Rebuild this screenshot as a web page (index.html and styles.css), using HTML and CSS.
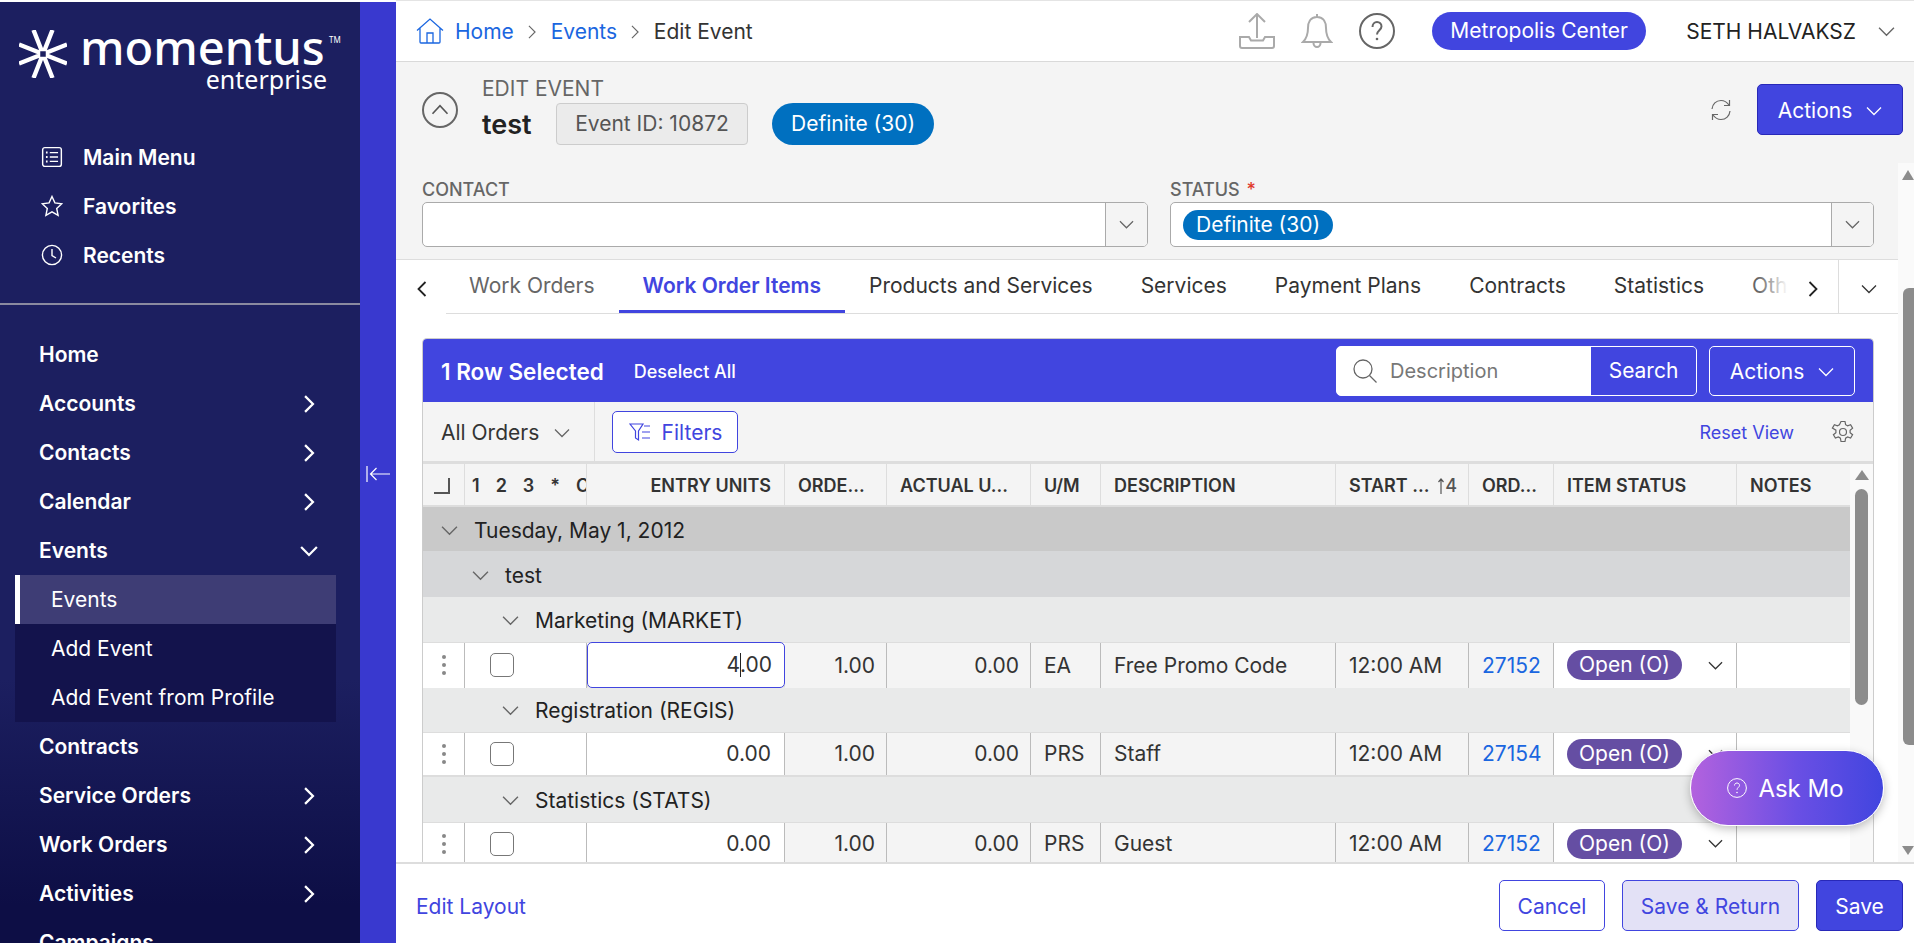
FILE: index.html
```html
<!DOCTYPE html>
<html>
	<head>
		<meta charset="utf-8">
		<title>Edit Event</title>
		<link rel="stylesheet" href="styles.css">
	</head>
	<body>
		<svg class="defs" width="0" height="0">
			<symbol id="chev-down" viewBox="0 0 16 16"><path d="M1 4.5 8 11.5 15 4.5" fill="none" stroke="currentColor"/></symbol>
			<symbol id="chev-right" viewBox="0 0 16 16"><path d="M4.5 1 11.5 8 4.5 15" fill="none" stroke="currentColor"/></symbol>
			<symbol id="chev-left" viewBox="0 0 16 16"><path d="M11.5 1 4.5 8 11.5 15" fill="none" stroke="currentColor"/></symbol>
		</svg>
		<div class="page">
			<div class="sidebar">
				<div class="logo">
					<svg class="logo-star" viewBox="0 0 48 48">
						<g stroke="#fff" stroke-width="4.4">
							<path d="M24 24 14.5 0M24 24 33.500 0M24 24 14.500 48M24 24 33.500 48M24 24 0 14.500M24 24 0 33.500M24 24 48 14.500M24 24 48 33.500"/>
						</g>
						<rect x="20.500" y="20.500" width="7" height="7" fill="#1c1f60" stroke="#fff" stroke-width="1.500"/>
					</svg>
					<div class="logo-text">
						<div class="logo-name">momentus<span class="logo-tm">TM</span></div>
						<div class="logo-sub">enterprise</div>
					</div>
				</div>
				<ul class="quick">
					<li>
						<svg viewBox="0 0 20 20" fill="none" stroke="#fff" stroke-width="1.300"><rect x="1.500" y="1.500" width="17" height="17" rx="2"/><path d="M8 6h7.500M8 10h7.500M8 14h7.500"/><path d="M4.500 6h1.500M4.500 10h1.500M4.500 14h1.500" stroke-width="1.800"/></svg>
						<span>Main Menu</span>
					</li>
					<li>
						<svg viewBox="0 0 22 22" fill="none" stroke="#fff" stroke-width="1.400"><path d="M11 1.500 13.900 7.900 20.800 8.700 15.700 13.400 17.100 20.300 11 16.800 4.900 20.300 6.300 13.400 1.200 8.700 8.100 7.900Z"/></svg>
						<span>Favorites</span>
					</li>
					<li>
						<svg viewBox="0 0 22 22" fill="none" stroke="#fff" stroke-width="1.400"><circle cx="11" cy="11" r="9.600"/><path d="M11 5v6.500l4 2.500"/></svg>
						<span>Recents</span>
					</li>
				</ul>
				<ul class="nav">
					<li class="nav-item">Home</li>
					<li class="nav-item">Accounts<svg class="nav-arrow"><use href="#chev-right"/></svg></li>
					<li class="nav-item">Contacts<svg class="nav-arrow"><use href="#chev-right"/></svg></li>
					<li class="nav-item">Calendar<svg class="nav-arrow"><use href="#chev-right"/></svg></li>
					<li class="nav-item">Events<svg class="nav-arrow"><use href="#chev-down"/></svg></li>
					<li class="subnav">
						<div class="subnav-item subnav-active">Events</div>
						<div class="subnav-item">Add Event</div>
						<div class="subnav-item">Add Event from Profile</div>
					</li>
					<li class="nav-item">Contracts</li>
					<li class="nav-item">Service Orders<svg class="nav-arrow"><use href="#chev-right"/></svg></li>
					<li class="nav-item">Work Orders<svg class="nav-arrow"><use href="#chev-right"/></svg></li>
					<li class="nav-item">Activities<svg class="nav-arrow"><use href="#chev-right"/></svg></li>
					<li class="nav-item">Campaigns</li>
				</ul>
			</div>
			<div class="strip">
				<svg viewBox="0 0 24 16" fill="none" stroke="#fff" stroke-width="1.200"><path d="M1 0v16M24 8H5M10.500 2 4.500 8l6 6"/></svg>
			</div>
			<div class="main">
				<div class="topbar">
					<div class="crumbs">
						<svg class="home-icon" viewBox="0 0 28 26" fill="none" stroke="#1a66e0" stroke-width="1.300"><path d="M1 12.500 14 1l13 11.500M4 10v14a1 1 0 0 0 1 1h18a1 1 0 0 0 1-1V10"/><path d="M11 25V15h6v10"/></svg>
						<a class="crumb-link" href="#">Home</a>
						<svg class="crumb-sep"><use href="#chev-right"/></svg>
						<a class="crumb-link" href="#">Events</a>
						<svg class="crumb-sep"><use href="#chev-right"/></svg>
						<span>Edit Event</span>
					</div>
					<div class="top-right">
						<svg class="top-icon icon-upload" viewBox="0 0 36 36" fill="none" stroke="#aaa" stroke-width="2"><path d="M18 25V1M10 9l8-8 8 8M1 24h9l2 3.500h12l2-3.500h9v9a2 2 0 0 1-2 2H3a2 2 0 0 1-2-2Z"/></svg>
						<svg class="top-icon icon-bell" viewBox="0 0 32 36" fill="none" stroke="#aaa" stroke-width="2"><path d="M16 4C9 4 7 10 7 15c0 8-2 11-5 14h28c-3-3-5-6-5-14 0-5-2-11-9-11ZM16 1v3M12.500 30a3.500 4 0 0 0 7 0"/></svg>
						<svg class="top-icon icon-help" viewBox="0 0 36 36" fill="none" stroke="#666" stroke-width="2"><circle cx="18" cy="18" r="17"/><path d="M13.500 14c0-3 2-5 4.500-5s4.500 2 4.500 4.500c0 3.500-4.500 4-4.500 8"/><circle cx="18" cy="26" r="1.300" fill="#666" stroke="none"/></svg>
						<div class="venue">Metropolis Center</div>
						<div class="user">SETH HALVAKSZ</div>
						<svg class="user-arrow"><use href="#chev-down"/></svg>
					</div>
				</div>
				<div class="title-bar">
					<div class="collapse">
						<svg viewBox="0 0 16 16"><path d="M2 11 8 4.500 14 11" fill="none" stroke="#555" stroke-width="1.300"/></svg>
					</div>
					<div class="title-text">
						<div class="eyebrow">EDIT EVENT</div>
						<div class="title-row">
							<span class="event-name">test</span>
							<span class="event-id">Event ID: 10872</span>
							<span class="status-pill">Definite (30)</span>
						</div>
					</div>
					<svg class="refresh" viewBox="0 0 22 22" fill="none" stroke="#666" stroke-width="1.200"><path d="M2 10C2.500 5 6 1.500 11 1.500c3.500 0 6 1.700 8 4.500M19.500 1v5.500H14M20 12c-.5 5-4 8.500-9 8.500-3.500 0-6-1.700-8-4.500M2.500 21v-5.500H8"/></svg>
					<button class="btn btn-primary btn-actions">Actions<svg><use href="#chev-down"/></svg></button>
				</div>
				<div class="scroller">
					<div class="content">
						<div class="fields">
							<div class="field field-contact">
								<label>CONTACT</label>
								<div class="select">
									<div class="select-value"></div>
									<div class="select-arrow"><svg><use href="#chev-down"/></svg></div>
								</div>
							</div>
							<div class="field field-status">
								<label>STATUS <span class="req">*</span></label>
								<div class="select">
									<div class="select-value"><span class="status-pill small">Definite (30)</span></div>
									<div class="select-arrow"><svg><use href="#chev-down"/></svg></div>
								</div>
							</div>
						</div>
						<div class="tabs">
							<div class="tab-prev"><svg><use href="#chev-left"/></svg></div>
							<div class="tab-list">
								<a class="tab tab-muted">Work Orders</a>
								<a class="tab tab-active">Work Order Items</a>
								<a class="tab">Products and Services</a>
								<a class="tab">Services</a>
								<a class="tab">Payment Plans</a>
								<a class="tab">Contracts</a>
								<a class="tab">Statistics</a>
								<a class="tab tab-muted">Other</a>
							</div>
							<div class="tab-next"><svg><use href="#chev-right"/></svg></div>
							<div class="tab-more"><svg><use href="#chev-down"/></svg></div>
						</div>
						<div class="card">
							<div class="card-head">
								<span class="selected">1 Row Selected</span>
								<a class="deselect">Deselect All</a>
								<div class="search">
									<svg viewBox="0 0 24 24" fill="none" stroke="#666" stroke-width="1.300"><circle cx="10" cy="10" r="9"/><path d="M16.500 16.500 23.500 23.500"/></svg>
									<span class="search-input">Description</span>
									<span class="search-btn">Search</span>
								</div>
								<button class="btn btn-outline-white">Actions<svg><use href="#chev-down"/></svg></button>
							</div>
							<div class="toolbar">
								<div class="orders">All Orders<svg><use href="#chev-down"/></svg></div>
								<button class="filters">
									<svg viewBox="0 0 22 22" fill="none" stroke="#4145df" stroke-width="1.200"><path d="M1 3h13L9.500 10v9l-3-2v-7ZM15 5h6M13 11h8M13 17h8"/></svg>
									Filters
								</button>
								<a class="reset">Reset View</a>
								<svg class="gear" viewBox="0 0 24 24" fill="none" stroke="#666" stroke-width="1.200"><circle cx="12" cy="12" r="3.500"/><path d="M10 1.500h4l.6 3.200 2 1.100 3-1.100 2 3.400-2.500 2.100v2.400l2.500 2.100-2 3.400-3-1.100-2 1.100-.6 3.400h-4l-.6-3.400-2-1.100-3 1.100-2-3.400 2.500-2.100v-2.400L1.400 8.100l2-3.400 3 1.100 2-1.100Z"/></svg>
							</div>
							<div class="grid-wrap">
								<div class="grid">
									<div class="row row-head">
										<div class="cell cell-corner"><span class="corner"></span></div>
										<div class="cell cell-flags"><span>1</span><span>2</span><span>3</span><span>*</span><span>C</span></div>
										<div class="cell num">ENTRY UNITS</div>
										<div class="cell">ORDE...</div>
										<div class="cell">ACTUAL U...</div>
										<div class="cell">U/M</div>
										<div class="cell">DESCRIPTION</div>
										<div class="cell cell-sort">START ...<span class="sort"><svg viewBox="0 0 6 16" fill="none" stroke="#555" stroke-width="1.200"><path d="M3 16V1M.5 4 3 1l2.500 3"/></svg>4</span></div>
										<div class="cell">ORD...</div>
										<div class="cell">ITEM STATUS</div>
										<div class="cell">NOTES</div>
									</div>
									<div class="group group-1"><svg><use href="#chev-down"/></svg>Tuesday, May 1, 2012</div>
									<div class="group group-2"><svg><use href="#chev-down"/></svg>test</div>
									<div class="group group-3"><svg><use href="#chev-down"/></svg>Marketing (MARKET)</div>
									<div class="row">
										<div class="cell cell-drag"><span class="dots"></span></div>
										<div class="cell cell-check"><span class="check"></span></div>
										<div class="cell num cell-focus"><span>4<i class="caret"></i>.00</span></div>
										<div class="cell num shade">1.00</div>
										<div class="cell num shade">0.00</div>
										<div class="cell shade">EA</div>
										<div class="cell shade">Free Promo Code</div>
										<div class="cell shade">12:00 AM</div>
										<div class="cell shade"><a class="order-link">27152</a></div>
										<div class="cell cell-status"><span class="open-pill">Open (O)</span><svg><use href="#chev-down"/></svg></div>
										<div class="cell"></div>
									</div>
									<div class="group group-3"><svg><use href="#chev-down"/></svg>Registration (REGIS)</div>
									<div class="row">
										<div class="cell cell-drag"><span class="dots"></span></div>
										<div class="cell cell-check"><span class="check"></span></div>
										<div class="cell num">0.00</div>
										<div class="cell num shade">1.00</div>
										<div class="cell num shade">0.00</div>
										<div class="cell shade">PRS</div>
										<div class="cell shade">Staff</div>
										<div class="cell shade">12:00 AM</div>
										<div class="cell shade"><a class="order-link">27154</a></div>
										<div class="cell cell-status"><span class="open-pill">Open (O)</span><svg><use href="#chev-down"/></svg></div>
										<div class="cell"></div>
									</div>
									<div class="group group-3"><svg><use href="#chev-down"/></svg>Statistics (STATS)</div>
									<div class="row">
										<div class="cell cell-drag"><span class="dots"></span></div>
										<div class="cell cell-check"><span class="check"></span></div>
										<div class="cell num">0.00</div>
										<div class="cell num shade">1.00</div>
										<div class="cell num shade">0.00</div>
										<div class="cell shade">PRS</div>
										<div class="cell shade">Guest</div>
										<div class="cell shade">12:00 AM</div>
										<div class="cell shade"><a class="order-link">27152</a></div>
										<div class="cell cell-status"><span class="open-pill">Open (O)</span><svg><use href="#chev-down"/></svg></div>
										<div class="cell"></div>
									</div>
								</div>
								<div class="inner-bar">
									<span class="arrow-up"></span>
									<span class="inner-thumb"></span>
								</div>
							</div>
						</div>
					</div>
					<div class="outer-bar">
						<span class="arrow-up"></span>
						<span class="outer-thumb"></span>
						<span class="arrow-down"></span>
					</div>
				</div>
				<div class="footer">
					<a class="edit-layout">Edit Layout</a>
					<button class="btn btn-outline">Cancel</button>
					<button class="btn btn-soft">Save &amp; Return</button>
					<button class="btn btn-primary">Save</button>
				</div>
				<div class="ask-mo">
					<svg viewBox="0 0 20 20" fill="none" stroke="#fff" stroke-width="1"><circle cx="10" cy="10" r="9.400"/><path d="M7.500 7.500C7.500 6 8.600 5 10 5s2.500 1 2.500 2.300c0 2-2.500 2.200-2.500 4.500"/><circle cx="10" cy="14.500" r=".8" fill="#fff" stroke="none"/></svg>
					Ask Mo
				</div>
			</div>
		</div>
	</body>
</html>
```
FILE: styles.css
```css
*{
	margin: 0;
	padding: 0;
	box-sizing: border-box;
}
ul{
	list-style: none;
}
a{
	text-decoration: none;
}
body{
	width: 1914px;
	height: 943px;
	overflow: hidden;
	background-color: #fff;
	font-family: Inter, "Liberation Sans", sans-serif;
	font-size: 21px;
	color: #333;
}
button{
	font-family: inherit;
}
use{
	stroke-width: 1.300;
}
.defs{
	display: block;
	height: 0;
}
.page{
	display: flex;
	height: 943px;
	padding-top: 2px;
}

/* left menu */
.sidebar{
	width: 360px;
	height: 941px;
	flex-shrink: 0;
	overflow: hidden;
	color: #fff;
	background: linear-gradient(#1c1f60 0, #1c1f60 72%, #0d0e45 96%);
}
.logo{
	display: flex;
	height: 130px;
	padding: 28px 0 0 19px;
}
.logo-star{
	width: 48px;
	height: 48px;
}
.logo-text{
	margin-left: 13px;
	width: 260px;
}
.logo-name{
	position: relative;
	font-family: "Noto Sans", sans-serif;
	font-size: 47px;
	font-weight: 500;
	line-height: 40px;
	margin-top: -3px;
}
.logo-tm{
	position: absolute;
	top: 8px;
	left: 249px;
	font-size: 8px;
	line-height: 10px;
	font-weight: 400;
}
.logo-sub{
	font-family: "Noto Sans", sans-serif;
	font-size: 25px;
	line-height: 24px;
	text-align: right;
	padding-right: 13px;
}
.quick{
	height: 173px;
	border-bottom: 2px solid #8a8aa0;
}
.quick li{
	display: flex;
	align-items: center;
	height: 49px;
	padding-left: 41px;
	font-weight: 600;
}
.quick span{
	padding-top: 1px;
}
.quick svg{
	width: 22px;
	height: 22px;
	margin-right: 20px;
}
.nav{
	margin-top: 25px;
}
.nav-item{
	display: flex;
	align-items: center;
	justify-content: space-between;
	height: 49px;
	padding: 0 42px 0 39px;
	font-weight: 600;
}
.nav-arrow{
	width: 18px;
	height: 18px;
}
.nav-arrow use{
	stroke-width: 2;
}
.subnav{
	width: 321px;
	margin-left: 15px;
	background-color: #13134c;
}
.subnav-item{
	display: flex;
	align-items: center;
	height: 49px;
	padding-left: 36px;
}
.subnav-active{
	padding-left: 31px;
	border-left: 5px solid #fff;
	background-color: #3e3d75;
}
.strip{
	width: 36px;
	flex-shrink: 0;
	padding: 464px 6px 0;
	background-color: #3939cf;
}
.strip svg{
	display: block;
	width: 24px;
	height: 16px;
}

/* main column */
.main{
	position: relative;
	flex: 1;
	min-width: 0;
	display: flex;
	flex-direction: column;
}
.topbar{
	display: flex;
	align-items: center;
	justify-content: space-between;
	flex-shrink: 0;
	padding: 0 19px 0 20px;
	border-top: 1px solid #e4e4e4;
	border-bottom: 1px solid #d9d9d9;
	margin-top: -2px;
	height: 62px;
}
.crumbs{
	display: flex;
	align-items: center;
}
.home-icon{
	width: 28px;
	height: 26px;
	margin-right: 11px;
}
.crumb-link{
	color: #1a66e0;
}
.crumb-sep{
	width: 14px;
	height: 14px;
	margin: 2px 11.400px 0;
	color: #666;
}
.top-right{
	display: flex;
	align-items: center;
}
.top-icon{
	height: 36px;
}
.icon-upload{
	width: 36px;
}
.icon-bell{
	width: 32px;
	margin-left: 26px;
}
.icon-help{
	width: 36px;
	margin-left: 26px;
}
.venue{
	width: 214px;
	height: 38px;
	margin-left: 37px;
	line-height: 38px;
	text-align: center;
	color: #fff;
	background-color: #4145df;
	border-radius: 19px;
}
.user{
	margin-left: 40px;
	color: #222;
}
.user-arrow{
	width: 17px;
	height: 17px;
	margin-left: 22px;
	color: #666;
}
.title-bar{
	display: flex;
	height: 101px;
	flex-shrink: 0;
	padding: 0 11px 0 26px;
	background-color: #f4f4f4;
}
.collapse{
	display: flex;
	align-items: center;
	justify-content: center;
	width: 36px;
	height: 36px;
	margin-top: 30px;
	border: 2px solid #666;
	border-radius: 50%;
}
.collapse svg{
	width: 20px;
	height: 20px;
}
.title-text{
	margin-left: 24px;
	flex: 1;
}
.eyebrow{
	margin-top: 16px;
	height: 22px;
	line-height: 22px;
	font-size: 21px;
	color: #666;
}
.title-row{
	display: flex;
	align-items: center;
	margin-top: 3px;
}
.event-name{
	width: 74px;
	font-size: 27px;
	font-weight: 600;
	color: #222;
}
.event-id{
	width: 192px;
	height: 42px;
	line-height: 40px;
	text-align: center;
	color: #555;
	background-color: #ebebeb;
	border: 1px solid #ccc;
	border-radius: 4px;
}
.status-pill{
	display: inline-block;
	height: 42px;
	margin-left: 24px;
	padding: 0 19px;
	line-height: 41px;
	color: #fff;
	background-color: #0070c0;
	border-radius: 21px;
}
.status-pill.small{
	height: 30px;
	margin-left: 0;
	padding: 0 13px;
	line-height: 30px;
	border-radius: 15px;
}
.refresh{
	width: 22px;
	height: 22px;
	margin: 37px 25px 0 0;
}
.btn{
	display: inline-flex;
	align-items: center;
	justify-content: center;
	height: 51px;
	padding-top: 2px;
	font-size: 21px;
	border-radius: 5px;
	border: 1px solid #4145df;
	background-color: #fff;
	color: #4145df;
}
.btn svg{
	width: 16px;
	height: 16px;
	margin-left: 14px;
}
.btn-primary{
	color: #fff;
	background-color: #4145df;
	border-color: #2828b8;
}
.btn-actions{
	width: 146px;
	margin-top: 22px;
}

/* scrolling part */
.scroller{
	flex: 1;
	min-height: 0;
	display: flex;
}
.content{
	flex: 1;
	min-width: 0;
	overflow: hidden;
}
.fields{
	display: flex;
	height: 97px;
	padding: 0 24px 0 26px;
	background-color: #f4f4f4;
	border-bottom: 1px solid #ddd;
}
.field label{
	display: block;
	height: 39px;
	padding-top: 17px;
	line-height: 20px;
	font-size: 18px;
	font-weight: 500;
	color: #666;
}
.field-contact{
	width: 726px;
}
.field-status{
	width: 704px;
	margin-left: 22px;
}
.req{
	color: #e0392b;
	margin-left: 2px;
}
.select{
	display: flex;
	height: 45px;
	background-color: #fff;
	border: 1px solid #aaa;
	border-radius: 5px;
	overflow: hidden;
}
.select-value{
	flex: 1;
	display: flex;
	align-items: center;
	padding-left: 12px;
}
.select-arrow{
	display: flex;
	align-items: center;
	justify-content: center;
	width: 42px;
	color: #666;
	background-color: #f4f4f4;
	border-left: 1px solid #aaa;
}
.select-arrow svg{
	width: 15px;
	height: 15px;
}
.tabs{
	display: flex;
	height: 54px;
}
.tab-prev{
	display: flex;
	align-items: center;
	justify-content: center;
	width: 50px;
	padding: 4px 0 0 2px;
	color: #222;
}
.tab-prev svg, .tab-next svg, .tab-more svg{
	width: 16px;
	height: 16px;
}
.tab-prev use, .tab-next use{
	stroke-width: 1.800;
}
.tab-list{
	position: relative;
	flex: 1;
	min-width: 0;
	display: flex;
	overflow: hidden;
	white-space: nowrap;
	border-bottom: 1px solid #ddd;
}
.tab-list::after{
	content: "";
	position: absolute;
	top: 0;
	right: 0;
	width: 40px;
	height: 52px;
	background: linear-gradient(to right, rgba(255,255,255,0), #fff 75%);
}
.tab{
	height: 54px;
	padding: 0 24px;
	line-height: 52px;
	color: #333;
	margin-left: -1px;
	margin-right: 1px;
}
.tab-muted{
	color: #666;
}
.tab-active{
	color: #4145df;
	font-weight: 600;
	border-bottom: 4px solid #4145df;
}
.tab-next{
	display: flex;
	align-items: center;
	justify-content: center;
	width: 40px;
	padding: 4px 10px 0 0;
	color: #222;
	border-bottom: 1px solid #ddd;
}
.tab-more{
	display: flex;
	align-items: center;
	justify-content: center;
	width: 60px;
	padding-top: 4px;
	color: #333;
	border-left: 1px solid #ddd;
	border-bottom: 1px solid #ddd;
}
.card{
	margin: 24px 24px 0 26px;
	height: 524px;
	overflow: hidden;
	border: 1px solid #ccc;
	border-bottom: 0;
	border-radius: 5px 5px 0 0;
}
.card-head{
	display: flex;
	align-items: center;
	height: 63px;
	padding: 0 18px;
	color: #fff;
	background-color: #4145df;
}
.selected{
	padding-top: 1px;
	font-size: 22.500px;
	font-weight: 600;
}
.deselect{
	margin-left: 30px;
	padding-top: 1px;
	flex: 1;
	font-size: 18px;
	font-weight: 500;
}
.search{
	display: flex;
	align-items: center;
	width: 361px;
	height: 50px;
	padding-left: 16px;
	background-color: #fff;
	border-radius: 5px;
	overflow: hidden;
	border: 1px solid #fff;
}
.search svg{
	width: 24px;
	height: 24px;
	flex-shrink: 0;
}
.search-input{
	flex: 1;
	margin-left: 13px;
	padding-top: 1px;
	font-size: 20px;
	color: #777;
}
.search-btn{
	width: 105px;
	height: 48px;
	line-height: 48px;
	text-align: center;
	color: #fff;
	background-color: #4145df;
}
.btn-outline-white{
	width: 146px;
	height: 50px;
	margin-left: 12px;
	color: #fff;
	background-color: transparent;
	border-color: #fff;
}
.toolbar{
	display: flex;
	align-items: center;
	height: 59px;
	padding-right: 18px;
	background-color: #f4f4f4;
}
.orders{
	display: flex;
	align-items: center;
	width: 172px;
	height: 59px;
	padding: 2px 0 0 18px;
	color: #333;
	border-right: 1px solid #ddd;
}
.orders svg{
	width: 16px;
	height: 16px;
	margin-left: 15px;
	color: #666;
}
.filters{
	display: flex;
	align-items: center;
	justify-content: center;
	width: 126px;
	height: 42px;
	margin-left: 17px;
	padding: 1px 0 0 1px;
	font-size: 21px;
	color: #4145df;
	background-color: #fff;
	border: 1px solid #4145df;
	border-radius: 5px;
}
.filters svg{
	width: 22px;
	height: 22px;
	margin-right: 11px;
}
.reset{
	margin-left: auto;
	padding-top: 2px;
	font-size: 18px;
	color: #4145df;
}
.gear{
	width: 24px;
	height: 24px;
	margin-left: 37px;
}
.grid-wrap{
	display: flex;
	border-top: 3px solid #ddd;
}
.grid{
	width: 1427px;
	flex-shrink: 0;
}
.row{
	display: grid;
	grid-template-columns: 42px 122px 198px 102px 144px 70px 235px 133px 85px 183px 113px;
	height: 44.500px;
	border-bottom: 2px solid #ddd;
}
.row-head{
	height: 43px;
	background-color: #f4f4f4;
	font-size: 18px;
	font-weight: 600;
}
.cell{
	display: flex;
	align-items: center;
	padding: 0 13px;
	overflow: hidden;
	white-space: nowrap;
	border-right: 1px solid #bbb;
	background-color: #fff;
}
.row-head .cell{
	padding-top: 2px;
	background-color: #f4f4f4;
	border-right-color: #ddd;
}
.row-head .cell:last-child, .row .cell:last-child{
	border-right: 0;
}
.shade{
	background-color: #f4f4f4;
}
.num{
	justify-content: flex-end;
}
.num.shade{
	padding-right: 11px;
}
.cell-corner{
	padding: 0 11px;
}
.corner{
	display: block;
	width: 16px;
	height: 16px;
	border-right: 2px solid #555;
	border-bottom: 2px solid #555;
}
.row-head .cell-flags{
	gap: 16px;
	padding: 2px 0 0 7px;
}
.cell-flags span{
	flex-shrink: 0;
}
.cell-sort{
	justify-content: space-between;
	padding-right: 11px;
}
.sort{
	display: flex;
	align-items: center;
	color: #555;
	font-weight: 500;
}
.sort svg{
	width: 6px;
	height: 16px;
	margin-right: 1px;
}
.group{
	display: flex;
	align-items: center;
	padding-top: 2px;
	color: #222;
}
.group svg{
	width: 17px;
	height: 17px;
	margin-right: 16px;
	color: #666;
}
.group-1{
	height: 44px;
	padding-left: 18px;
	background-color: #c9c9c9;
}
.group-2{
	height: 46px;
	padding-left: 49px;
	background-color: #d6d7d9;
}
.group-3{
	height: 45.500px;
	padding-left: 79px;
	background-color: #e9eaea;
	border-bottom: 1px solid #ddd;
}
.cell-drag{
	justify-content: center;
	padding: 0;
}
.dots{
	display: block;
	width: 4px;
	height: 4px;
	border-radius: 50%;
	background-color: #888;
	box-shadow: 0 -8px 0 #888, 0 8px 0 #888;
}
.cell-check{
	padding-left: 25px;
}
.check{
	display: block;
	width: 24px;
	height: 24px;
	background-color: #fff;
	border: 1px solid #777;
	border-radius: 5px;
}
.cell-focus{
	border: 1px solid #4145df;
	border-radius: 5px;
	height: 46px;
	margin-top: -1px;
	padding-right: 12px;
}
.caret{
	display: inline-block;
	width: 1px;
	height: 24px;
	margin: 0 -1px 0 0;
	vertical-align: -5px;
	background-color: #222;
}
.order-link{
	color: #1a66e0;
}
.cell-status{
	padding-left: 13px;
	justify-content: space-between;
}
.cell-status svg{
	width: 15px;
	height: 15px;
	color: #333;
}
.open-pill{
	width: 115px;
	height: 30px;
	line-height: 30px;
	text-align: center;
	color: #fff;
	background-color: #654ea3;
	border-radius: 15px;
}
.inner-bar{
	display: flex;
	flex-direction: column;
	align-items: center;
	flex: 1;
	height: 401px;
	padding-top: 6px;
	background-color: #f9f9f9;
}
.outer-bar{
	display: flex;
	flex-direction: column;
	align-items: flex-end;
	width: 16px;
	flex-shrink: 0;
	padding-top: 7px;
	background-color: #fafafa;
}
.arrow-up{
	width: 0;
	height: 0;
	border-left: 7px solid transparent;
	border-right: 7px solid transparent;
	border-bottom: 10px solid #8c8c8c;
}
.outer-bar .arrow-up, .arrow-down{
	border-left-width: 6px;
	border-right-width: 6px;
}
.arrow-down{
	width: 0;
	height: 0;
	border-left: 6px solid transparent;
	border-right: 6px solid transparent;
	border-top: 9px solid #8c8c8c;
}
.inner-thumb{
	display: block;
	width: 13px;
	height: 216px;
	margin-top: 9px;
	background-color: #8c8c8c;
	border-radius: 7px;
}
.outer-thumb{
	display: block;
	width: 11px;
	height: 457px;
	margin: 108px 0 101px;
	background-color: #8c8c8c;
	border-radius: 6px 0 0 6px;
}
.footer{
	display: flex;
	align-items: center;
	height: 81px;
	flex-shrink: 0;
	padding: 4px 11px 0 20px;
	background-color: #fff;
	border-top: 2px solid #ddd;
}
.edit-layout{
	flex: 1;
	padding-top: 2px;
	color: #4145df;
}
.footer .btn{
	margin-left: 17px;
}
.btn-outline{
	width: 106px;
}
.btn-soft{
	width: 177px;
	background-color: #e3e1f6;
}
.footer .btn-primary{
	width: 87px;
}
.ask-mo{
	position: absolute;
	top: 748px;
	left: 1294px;
	display: flex;
	align-items: center;
	justify-content: center;
	width: 194px;
	height: 76px;
	padding-right: 3px;
	font-size: 24px;
	color: #fff;
	background: linear-gradient(to right, #b362de, #6a4fe4 55%, #4145df);
	border: 1px solid #fff;
	border-radius: 38px;
	box-shadow: 0 3px 10px rgba(0,0,0,.25);
}
.ask-mo svg{
	width: 20px;
	height: 20px;
	margin-right: 11px;
}
```
